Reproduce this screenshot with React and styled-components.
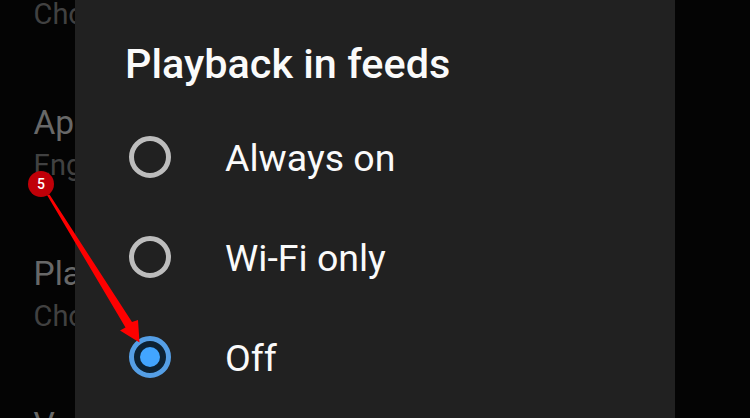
import React from "react";
import styled, { createGlobalStyle } from "styled-components";

const GlobalStyle = createGlobalStyle`
  * { box-sizing: border-box; }
  body { margin: 0; background: #040404; }
`;

const Screen = styled.main`
  position: relative;
  display: grid;
  grid-template-columns: 75px 600px 75px;
  width: 750px;
  height: 418px;
  overflow: hidden;
  background: #040404;
  font-family: Roboto, sans-serif;
`;

const SettingsList = styled.div`
  display: flex;
  flex-direction: column;
  gap: 62px;
  height: 468px;
  margin-top: -50px;
  padding-left: 33.5px;
  overflow: hidden;
  white-space: nowrap;
`;

const SettingItem = styled.div`
  flex: none;
  height: 89px;
`;

const SettingName = styled.div`
  height: 45px;
  font-size: 33.5px;
  line-height: 44px;
  color: #686868;
`;

const SettingHint = styled.div`
  height: 38px;
  font-size: 29px;
  line-height: 38px;
  color: #414141;
`;

const Dialog = styled.section`
  height: 418px;
  padding-top: 39px;
  background: #212121;
  color: #fafafa;
`;

const Title = styled.h1`
  margin: 0 0 18px;
  padding-left: 50px;
  font-size: 41.4px;
  font-weight: 500;
  line-height: 50px;
  white-space: nowrap;
`;

const Option = styled.label`
  display: flex;
  align-items: center;
  gap: 54px;
  height: 100px;
  padding-left: 54px;
`;

const Radio = styled.span`
  display: grid;
  place-items: center;
  flex: none;
  width: 42px;
  height: 42px;
  border: 5px solid ${(p) => (p.$checked ? "#559fe6" : "#bdbdbd")};
  border-radius: 50%;
  background: ${(p) => (p.$checked ? "#0d2233" : "transparent")};
`;

const RadioDot = styled.span`
  width: 20px;
  height: 20px;
  border-radius: 50%;
  background: #42a5ff;
`;

const OptionLabel = styled.span`
  padding-top: 1px;
  font-size: 37.5px;
  line-height: 44px;
  white-space: nowrap;
`;

const Arrow = styled.svg`
  position: absolute;
  left: 0;
  top: 0;
  pointer-events: none;
`;

const StepBadge = styled.span`
  position: absolute;
  left: 28px;
  top: 171px;
  width: 26px;
  height: 26px;
  border-radius: 50%;
  background: #c00008;
  color: #fff;
  font-size: 14px;
  font-weight: 500;
  line-height: 26px;
  text-align: center;
`;

const settings = [
  { name: "", hint: "Cho" },
  { name: "Ap", hint: "Eng" },
  { name: "Pla", hint: "Cho" },
  { name: "V", hint: "" },
];

const options = ["Always on", "Wi-Fi only", "Off"];
const selected = "Off";

export default function App() {
  return (
    <>
      <GlobalStyle />
      <Screen>
        <SettingsList>
          {settings.map((item, i) => (
            <SettingItem key={i}>
              <SettingName>{item.name}</SettingName>
              <SettingHint>{item.hint}</SettingHint>
            </SettingItem>
          ))}
        </SettingsList>
        <Dialog>
          <Title>Playback in feeds</Title>
          {options.map((label) => (
            <Option key={label}>
              <Radio $checked={label === selected}>
                {label === selected && <RadioDot />}
              </Radio>
              <OptionLabel>{label}</OptionLabel>
            </Option>
          ))}
        </Dialog>
        <Arrow width="750" height="418" viewBox="0 0 750 418">
          <path d="M47 195 L49.5 194.5 L132 322 L138 320 L139.5 342.5 L120 330.5 L125.5 327.5 Z" fill="#fe0000" />
        </Arrow>
        <StepBadge>5</StepBadge>
      </Screen>
    </>
  );
}
